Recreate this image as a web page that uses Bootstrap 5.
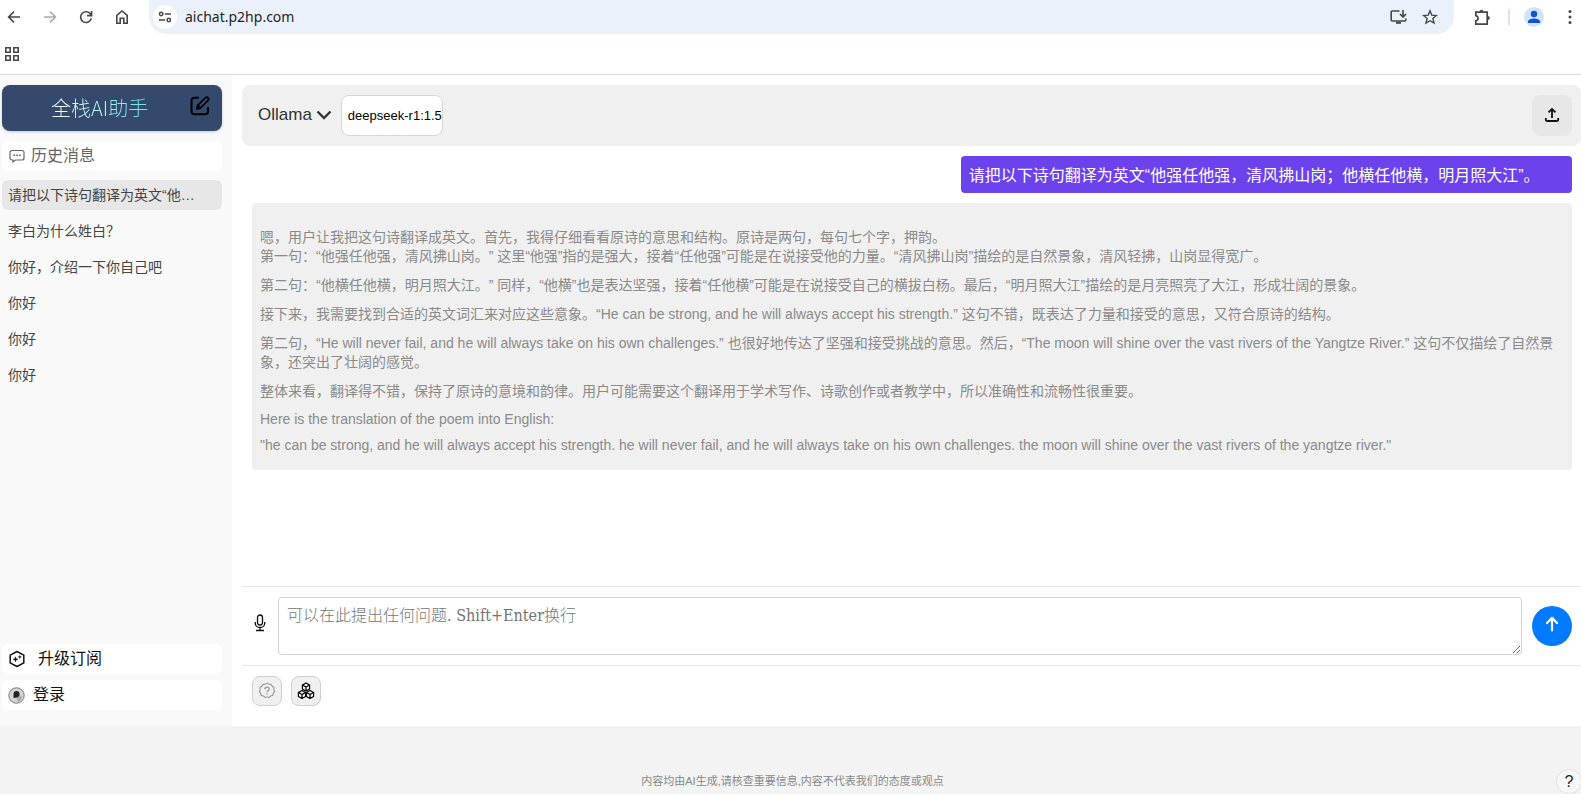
<!DOCTYPE html>
<html lang="zh-CN">
<head>
<meta charset="utf-8">
<meta name="viewport" content="width=device-width, initial-scale=1">
<title>全栈AI助手</title>
<link href="https://cdn.jsdelivr.net/npm/bootstrap@5.3.0/dist/css/bootstrap.min.css" rel="stylesheet">
<style>
  body { font-family: "Liberation Sans", "Noto Sans CJK SC", sans-serif; background: #f3f3f3; color: #222; text-spacing-trim: space-all; }
  button, a { color: inherit; }
  svg { display: block; flex-shrink: 0; }

  .browser-bar { height: 34px; padding: 0 6px; color: #474747; font-family: "Noto Sans", sans-serif; }
  .tool-btn { width: 16px; height: 34px; padding: 0; border: 0; background: none; display: flex; align-items: center; justify-content: center; }
  .nav-tools { gap: 20px; }
  .omnibox { background: #ebf1fa; border-radius: 0 0 17px 17px; height: 34px; padding: 0 16px 0 4px; margin: 0 20px 0 19px; }
  .site-info { width: 24px; height: 24px; border-radius: 50%; background: #fff; border: 0; padding: 0; }
  .url-input { border: 0; background: none; font-size: 14px; color: #1f1f1f; outline: 0; padding: 0 0 2px; min-width: 0; }
  .tool-sep { width: 2px; height: 16px; background: #d3e3fd; margin: 0 16px 0 18px; }
  .menu-btn { margin-left: 20px; margin-right: -3px; }
  .bookmark-bar { height: 41px; padding: 0 4px; border-bottom: 1px solid #dcdcdc; color: #474747; }

  .side { width: 232px; background: #f9f9f9; padding: 10px 10px 16px 2px; }
  .side-list { gap: 6px; }
  .brand { height: 46px; border-radius: 8px; background: #34496b; padding: 0 12px 0 49px; box-shadow: 0 1px 3px rgba(0,0,0,.2); }
  .brand-name { font-family: "Noto Sans CJK SC", sans-serif; font-size: 20px; line-height: 30px; margin: 0; font-weight: 300; background: linear-gradient(90deg, #fff, #5ee7e7); -webkit-background-clip: text; background-clip: text; color: transparent; }
  .side-row { height: 30px; border-radius: 6px; background: #fff; border: 0; font-size: 16px; line-height: 24px; padding: 0 6px; color: #111; }
  .side-title { color: #666; margin: 10px 0 9px; padding: 0 7px; }
  .side-title span { margin-left: 6px; }
  .chat-link { display: block; height: 30px; line-height: 30px; border-radius: 6px; padding: 0 6px; font-size: 14px; color: #444; text-decoration: none; }
  .chat-link.active { background: #e7e7e7; }

  .pane { background: #fff; padding: 10px 0 0 10px; min-width: 0; }
  .model-bar { height: 61px; background: #f0f0f0; border-radius: 8px; padding: 0 9px 0 16px; gap: 9px; }
  .provider { border: 0; background: none; padding: 0 0 2px; font-size: 17px; line-height: 24px; color: #333; }
  .model-input { width: 102px; height: 41px; border: 1px solid #d6d6d6; border-radius: 8px; background: #fff; color: #000; font-size: 13px; padding: 0 0 0 6px; }
  .upload-btn { width: 40px; height: 41px; border: 0; border-radius: 8px; background: #e7e7e7; color: #111; }
  .messages { padding: 10px 9px 0 10px; gap: 10px; }
  .msg { border-radius: 4px; }
  .msg-user { width: 46.3%; background: #6c42ed; color: #fff; font-size: 16px; line-height: 21px; padding: 9px 8px 7px; }
  .msg-bot { background: #f0f0f0; color: #8a8a8a; font-size: 14px; line-height: 19px; padding: 25px 8px 17px; }
  .msg-bot p { margin: 0 0 10px; }
  .msg-bot .latin { line-height: 16px; }

  .ask-row { border-top: 1px solid #e8e8e8; border-bottom: 1px solid #e8e8e8; padding: 10px 9px 10px 10px; gap: 10px; }
  .ask-box { height: 58px; border: 1px solid #d4d4d4; border-radius: 4px; padding: 6px 8px; font-family: "DejaVu Serif Condensed", "DejaVu Serif", "Noto Sans CJK SC", serif; font-size: 16px; line-height: 24px; resize: vertical; outline: 0; min-width: 0; }
  .ask-box::placeholder { color: #757575; font-weight: 300; }
  .send-btn { width: 40px; height: 40px; border-radius: 50%; border: 0; background: #007bff; color: #fff; }
  .mic-btn { width: 16px; border: 0; background: none; padding: 0 0 6px; color: #111; }
  .chips { padding: 10px 10px 20px; gap: 9px; }
  .chip { width: 30px; height: 30px; border: 1px solid #cfcfcf; border-radius: 8px; background: #f0f0f0; padding: 0; color: #000; }
  .chip-muted { color: #999; }

  .foot { height: 68px; padding: 0 0 5px 4px; font-size: 11px; line-height: 16px; color: #888; }
  .help-btn { position: absolute; right: -1px; bottom: 0; width: 26px; height: 25px; border: 1px solid #e0e0e0; border-radius: 13px; background: #f7f7f7; color: #222; font-size: 16px; line-height: 16px; padding: 0; }
</style>
</head>
<body class="vh-100 d-flex flex-column overflow-hidden">

<header class="bg-white">
  <div class="browser-bar d-flex align-items-center">
    <div class="nav-tools d-flex">
      <button class="tool-btn" aria-label="后退"><svg width="14" height="14" viewBox="0 0 14 14" fill="none" stroke="currentColor" stroke-width="1.6"><path d="M13 7H2M7 1.6L1.6 7 7 12.4"/></svg></button>
      <button class="tool-btn" aria-label="前进" style="color:#aaa"><svg width="14" height="14" viewBox="0 0 14 14" fill="none" stroke="currentColor" stroke-width="1.6"><path d="M1 7h11M7 1.6L12.4 7 7 12.4"/></svg></button>
      <button class="tool-btn" aria-label="刷新"><svg width="14" height="14" viewBox="0 0 14 14" fill="none" stroke="currentColor" stroke-width="1.6"><path d="M12.3 8.4A5.4 5.4 0 1 1 11.6 4.2L12.4 5.4M12.6 1v4.6H8"/></svg></button>
      <button class="tool-btn" aria-label="主页"><svg width="14" height="16" viewBox="0 0 14 16" fill="none" stroke="currentColor" stroke-width="1.6"><path d="M1.8 14.2V6.4L7 2l5.2 4.4v7.8H8.8V9.2H5.2v5z"/></svg></button>
    </div>
    <div class="omnibox d-flex align-items-center flex-grow-1">
      <button class="site-info d-flex align-items-center justify-content-center" aria-label="网站信息"><svg width="14" height="12" viewBox="0 0 14 12" fill="none" stroke="currentColor" stroke-width="1.5"><circle cx="3.2" cy="3" r="1.7"/><path d="M6.8 3H13M1 9h6.2"/><circle cx="10.8" cy="9" r="1.7"/></svg></button>
      <input class="url-input flex-grow-1 ms-2" type="text" value="aichat.p2hp.com" aria-label="地址">
      <button class="tool-btn" aria-label="安装"><svg width="17" height="16" viewBox="0 0 17 16" fill="none" stroke="currentColor" stroke-width="1.6"><path d="M9.5 2H2.2a1 1 0 0 0-1 1v8a1 1 0 0 0 1 1h12.6a1 1 0 0 0 1-1V9.5M13 1v6.5M10 5l3 3 3-3"/><path d="M6 12.8h5v2H6z" fill="currentColor" stroke="none"/></svg></button>
      <button class="tool-btn ms-3" aria-label="收藏"><svg width="16" height="16" viewBox="0 0 16 16" fill="none" stroke="currentColor" stroke-width="1.4"><path d="M8 1.8l1.8 4.3 4.6.4-3.5 3 1.1 4.6L8 11.7l-4 2.4 1.1-4.6-3.5-3 4.6-.4z"/></svg></button>
    </div>
    <button class="tool-btn" aria-label="扩展程序"><svg width="17" height="17" viewBox="0 0 17 17" fill="none" stroke="currentColor" stroke-width="1.7"><path d="M1.8 3.2h11.4v12H1.8v-3.4c3-.6 3-4.6 0-5.2z"/><path d="M5.5 2.8a2 2 0 0 1 4 0zM13.8 7a2 2 0 0 1 0 4z" fill="currentColor" stroke="none"/></svg></button>
    <span class="tool-sep"></span>
    <button class="tool-btn" aria-label="个人资料"><svg width="20" height="20" viewBox="0 0 20 20"><circle cx="10" cy="10" r="10" fill="#d3e3fd"/><circle cx="10" cy="7" r="3.2" fill="#0b57d0"/><path d="M4 16v-1.5c0-2 3.6-3 6-3s6 1 6 3V16z" fill="#0b57d0"/></svg></button>
    <button class="tool-btn menu-btn" aria-label="菜单"><svg width="4" height="16" viewBox="0 0 4 16" fill="currentColor"><circle cx="2" cy="2.5" r="1.5"/><circle cx="2" cy="8" r="1.5"/><circle cx="2" cy="13.5" r="1.5"/></svg></button>
  </div>
  <div class="bookmark-bar d-flex align-items-center">
    <button class="tool-btn" aria-label="应用"><svg width="14" height="14" viewBox="0 0 14 14" fill="none" stroke="currentColor" stroke-width="1.6"><path d="M.8.8h4.4v4.4H.8zM8.8.8h4.4v4.4H8.8zM.8 8.8h4.4v4.4H.8zM8.8 8.8h4.4v4.4H8.8z"/></svg></button>
  </div>
</header>

<div class="d-flex flex-grow-1" style="min-height:0">
  <aside class="side d-flex flex-column flex-shrink-0">
    <div class="brand d-flex align-items-center justify-content-between">
      <h1 class="brand-name">全栈AI助手</h1>
      <button class="border-0 bg-transparent p-0 pb-1 text-black" aria-label="新对话"><svg width="20" height="20" viewBox="0 0 20 20" fill="none" stroke="currentColor" stroke-width="2" stroke-linecap="round" stroke-linejoin="round"><path d="M8 1.8H4.500A3 3 0 0 0 1.500 4.800v10.400a3 3 0 0 0 3 3h10.500a3 3 0 0 0 3-3V12"/><path d="M7 13l.6-3.600 7.800-7.600a1.800 1.800 0 0 1 2.600 2.600l-7.600 7.700zM8 9.600l2.500 2.500" stroke-width="1.7"/></svg></button>
    </div>
    <div class="side-row side-title d-flex align-items-center">
      <svg width="16" height="16" viewBox="0 0 16 16" fill="none" stroke="currentColor" stroke-width="1.2"><path d="M3 2.500h10a2 2 0 0 1 2 2v5.500a2 2 0 0 1-2 2H6.500L4 14v-2H3a2 2 0 0 1-2-2V4.500a2 2 0 0 1 2-2z"/><path d="M4.300 7.300h1.600M7.200 7.300h1.600M10.100 7.300h1.600" stroke-width="1.600"/></svg>
      <span>历史消息</span>
    </div>
    <nav class="side-list d-grid">
      <a href="#" class="chat-link active">请把以下诗句翻译为英文“他…</a>
      <a href="#" class="chat-link">李白为什么姓白？</a>
      <a href="#" class="chat-link">你好，介绍一下你自己吧</a>
      <a href="#" class="chat-link">你好</a>
      <a href="#" class="chat-link">你好</a>
      <a href="#" class="chat-link">你好</a>
    </nav>
    <div class="side-list mt-auto d-grid">
      <button class="side-row d-flex align-items-center"><svg width="18" height="18" viewBox="0 0 18 18" fill="none" stroke="currentColor" stroke-width="1.5" stroke-linejoin="round"><path d="M9 1.500l6.800 3.600v7.800L9 16.500l-6.800-3.600V5.100z"/><path d="M7.500 6.800l.6 1.900 1.900.6-1.900.6-.6 1.900-.6-1.900-1.900-.6 1.900-.6zM11.800 5.400l.4 1.100 1.100.4-1.100.4-.4 1.100-.4-1.100-1.100-.4 1.100-.4z" fill="currentColor" stroke-width=".5"/></svg><span class="ms-2 ps-1">升级订阅</span></button>
      <button class="side-row d-flex align-items-center"><svg width="17" height="17" viewBox="0 0 17 17"><circle cx="8.500" cy="8.500" r="7.700" fill="#d5d5d5" stroke="#777"/><path d="M8 10l6-1-1 4-3 2z" fill="#aaa"/><path d="M5.500 7a3 3 0 0 1 6 0v2l-2.500 1.500-3.500.5z" fill="#222"/></svg><span class="ms-2">登录</span></button>
    </div>
  </aside>

  <main class="pane d-flex flex-column flex-grow-1">
    <div class="model-bar d-flex align-items-center">
      <button class="provider d-flex align-items-center">Ollama <svg class="ms-1" width="16" height="10" viewBox="0 0 16 10" fill="none" stroke="currentColor" stroke-width="2.4"><path d="M1.500 1.500L8 8l6.500-6.500"/></svg></button>
      <input class="model-input" type="text" value="deepseek-r1:1.5b" aria-label="模型">
      <button class="upload-btn ms-auto d-flex align-items-center justify-content-center p-0" aria-label="上传"><svg width="16" height="18" viewBox="0 0 16 18" fill="none" stroke="currentColor" stroke-width="1.8"><path d="M8 11V2M4.500 5.300L8 1.900l3.500 3.400M1.800 11v1.500a1.500 1.500 0 0 0 1.500 1.500h9.400a1.500 1.500 0 0 0 1.500-1.500V11"/></svg></button>
    </div>

    <section class="messages flex-grow-1 overflow-hidden d-flex flex-column">
      <div class="msg msg-user align-self-end">请把以下诗句翻译为英文“他强任他强，清风拂山岗；他横任他横，明月照大江”。</div>
      <div class="msg msg-bot">
        <p>嗯，用户让我把这句诗翻译成英文。首先，我得仔细看看原诗的意思和结构。原诗是两句，每句七个字，押韵。<br>第一句：“他强任他强，清风拂山岗。” 这里“他强”指的是强大，接着“任他强”可能是在说接受他的力量。“清风拂山岗”描绘的是自然景象，清风轻拂，山岗显得宽广。</p>
        <p>第二句：“他横任他横，明月照大江。” 同样，“他横”也是表达坚强，接着“任他横”可能是在说接受自己的横拔白杨。最后，“明月照大江”描绘的是月亮照亮了大江，形成壮阔的景象。</p>
        <p>接下来，我需要找到合适的英文词汇来对应这些意象。“He can be strong, and he will always accept his strength.” 这句不错，既表达了力量和接受的意思，又符合原诗的结构。</p>
        <p>第二句，“He will never fail, and he will always take on his own challenges.” 也很好地传达了坚强和接受挑战的意思。然后，“The moon will shine over the vast rivers of the Yangtze River.” 这句不仅描绘了自然景象，还突出了壮阔的感觉。</p>
        <p>整体来看，翻译得不错，保持了原诗的意境和韵律。用户可能需要这个翻译用于学术写作、诗歌创作或者教学中，所以准确性和流畅性很重要。</p>
        <p class="latin">Here is the translation of the poem into English:</p>
        <p class="latin mb-0">"he can be strong, and he will always accept his strength. he will never fail, and he will always take on his own challenges. the moon will shine over the vast rivers of the yangtze river."</p>
      </div>
    </section>

    <form class="ask-row d-flex align-items-center">
      <button type="button" class="mic-btn" aria-label="语音输入"><svg width="16" height="18" viewBox="0 0 16 18" fill="none" stroke="currentColor" stroke-width="1.3"><rect x="5.500" y="1" width="5" height="10" rx="2.500"/><path d="M3.300 8v1.500a4.700 4 0 0 0 9.400 0V8M8 13.500v3M4 16.500h8"/></svg></button>
      <textarea class="ask-box flex-grow-1" placeholder="可以在此提出任何问题. Shift+Enter换行" aria-label="提问"></textarea>
      <button type="button" class="send-btn d-flex align-items-center justify-content-center p-0 pb-1" aria-label="发送"><svg width="16" height="18" viewBox="0 0 16 18" fill="none" stroke="currentColor" stroke-width="2.2" stroke-linecap="round" stroke-linejoin="round"><path d="M8 15.500V3M3 8l5-5.200L13 8"/></svg></button>
    </form>
    <div class="chips d-flex">
      <button class="chip chip-muted d-flex align-items-center justify-content-center" aria-label="帮助"><svg width="18" height="18" viewBox="0 0 18 18" fill="none" stroke="currentColor" stroke-width="1.1"><path d="M9 1.200q1.500 1.400 3.900 1.100 1 2.200 3.100 3.300-.6 1.900.6 3.900-1.600 1.500-1.900 3.900-2.300.3-3.700 2-2-.8-4 0-1.400-1.700-3.700-2-.3-2.400-1.900-3.900 1.200-2 .6-3.900 2.100-1.100 3.100-3.300 2.400.3 3.900-1.100z"/><path d="M6.800 7.300c0-3 4.400-2.800 4.400-.2 0 1.700-2.200 1.500-2.200 3.200M9 11.400v1.300" stroke-width="1.300"/></svg></button>
      <button class="chip d-flex align-items-center justify-content-center" aria-label="模型库"><svg width="18" height="18" viewBox="0 0 18 18" fill="none" stroke="currentColor" stroke-width="1.2" stroke-linejoin="round"><path id="cube" d="M9 1l3.600 2v4L9 9 5.400 7V3zM5.400 3L9 5l3.600-2M9 5v4"/><use href="#cube" x="-4" y="7.500"/><use href="#cube" x="4" y="7.500"/></svg></button>
    </div>
  </main>
</div>

<footer class="foot d-flex align-items-end justify-content-center position-relative flex-shrink-0">
  <span>内容均由AI生成,请核查重要信息,内容不代表我们的态度或观点</span>
  <button class="help-btn" aria-label="帮助中心">?</button>
</footer>

<script src="https://cdn.jsdelivr.net/npm/bootstrap@5.3.0/dist/js/bootstrap.bundle.min.js"></script>
</body>
</html>
